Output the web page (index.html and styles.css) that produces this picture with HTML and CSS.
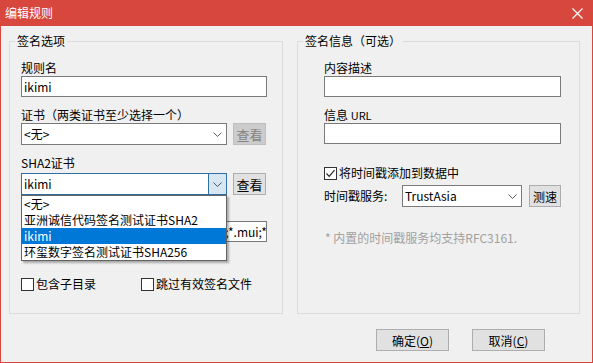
FILE: index.html
```html
<!DOCTYPE html>
<html lang="zh-CN">
<head>
<meta charset="utf-8">
<title>编辑规则</title>
<link rel="stylesheet" href="styles.css">
</head>
<body>
<div class="window">
  <div class="titlebar">
    <span class="title">编辑规则</span>
    <svg class="close" width="11" height="11" viewBox="0 0 11 11"><path d="M0.5 0.5 L10.5 10.5 M10.5 0.5 L0.5 10.5" stroke="#fff" stroke-width="1.2" fill="none"/></svg>
  </div>
  <div class="content">
    <div class="groups">
      <fieldset class="group group-left">
        <legend>签名选项</legend>
        <div class="group-body">
          <div class="label">规则名</div>
          <div class="input w-full">ikimi</div>

          <div class="label mt10">证书（两类证书至少选择一个）</div>
          <div class="row gap6">
            <div class="combo w-combo">
              <span class="combo-text">&lt;无&gt;</span>
              <span class="arrow"><svg width="9" height="5" viewBox="0 0 9 5"><path d="M0.5 0.5 L4.5 4.5 L8.5 0.5" stroke="#5a5a5a" fill="none"/></svg></span>
            </div>
            <div class="btn btn-small disabled">查看</div>
          </div>

          <div class="label mt10">SHA2证书</div>
          <div class="row gap6 mt2">
            <div class="combo-wrap">
              <div class="combo w-combo focused">
                <span class="combo-text">ikimi</span>
                <span class="arrow hot"><svg width="9" height="5" viewBox="0 0 9 5"><path d="M0.5 0.5 L4.5 4.5 L8.5 0.5" stroke="#3a5a78" fill="none"/></svg></span>
              </div>
              <ul class="droplist">
                <li>&lt;无&gt;</li>
                <li>亚洲诚信代码签名测试证书SHA2</li>
                <li class="selected">ikimi</li>
                <li>环玺数字签名测试证书SHA256</li>
              </ul>
            </div>
            <div class="btn btn-small">查看</div>
          </div>

          <div class="label mt10 spacer"></div>
          <div class="input w-full">*.exe;*.dll;*.ocx;*.ax;*.sys;*.cab;*.msi;*.mui;*.appx</div>

          <div class="checks">
            <div class="check"><span class="cb"></span><span>包含子目录</span></div>
            <div class="check"><span class="cb"></span><span>跳过有效签名文件</span></div>
          </div>
        </div>
      </fieldset>

      <fieldset class="group group-right">
        <legend>签名信息（可选）</legend>
        <div class="group-body right-body">
          <div class="label">内容描述</div>
          <div class="input w-right"></div>

          <div class="label mt10">信息 <span class="latin">URL</span></div>
          <div class="input w-right"></div>

          <div class="check ts-check"><span class="cb checked"><svg width="11" height="11" viewBox="0 0 11 11"><path d="M1.5 5.5 L4.2 8.3 L9.5 2.2" stroke="#222" stroke-width="1.2" fill="none"/></svg></span><span>将时间戳添加到数据中</span></div>

          <div class="row ts-row">
            <span class="ts-label">时间戳服务:</span>
            <div class="combo w-ts">
              <span class="combo-text">TrustAsia</span>
              <span class="arrow"><svg width="9" height="5" viewBox="0 0 9 5"><path d="M0.5 0.5 L4.5 4.5 L8.5 0.5" stroke="#5a5a5a" fill="none"/></svg></span>
            </div>
            <div class="btn btn-speed">测速</div>
          </div>

          <div class="note">* 内置的时间戳服务均支持RFC3161.</div>
        </div>
      </fieldset>
    </div>

    <div class="buttons">
      <div class="btn btn-dialog">确定(<u>O</u>)</div>
      <div class="btn btn-dialog">取消(<u>C</u>)</div>
    </div>
  </div>
</div>
</body>
</html>
```

FILE: styles.css
```css
html, body {
  margin: 0;
  padding: 0;
  background: #f0f0f0;
}

body {
  font-family: "Noto Sans CJK SC", "Microsoft YaHei", sans-serif;
  font-size: 12px;
  color: #000;
}

.window {
  width: 593px;
  height: 363px;
  box-sizing: border-box;
  border: 1px solid #d8473d;
  border-top: 0;
  background: #f0f0f0;
  display: flex;
  flex-direction: column;
}

.titlebar {
  height: 26px;
  margin: 0 -1px;
  background: #d8473d;
  color: #fff;
  display: flex;
  align-items: center;
  justify-content: space-between;
  padding: 0 10px 0 5px;
}

.title {
  line-height: 16px;
}

.close {
  display: block;
}

.content {
  padding: 8px 0 0 8px;
}

.groups {
  display: flex;
  gap: 14px;
}

.group {
  margin: 0;
  padding: 0;
  border: 1px solid #dcdcdc;
  box-sizing: border-box;
  height: 280px;
  min-width: 0;
}

.group-left {
  width: 274px;
}

.group-right {
  width: 283px;
}

legend {
  padding: 0 2px;
  margin-left: 5px;
  line-height: 14px;
}

.group-body {
  padding: 12px 0 0 11px;
}

.right-body {
  padding-left: 26px;
}

.label {
  height: 16px;
  line-height: 16px;
  white-space: nowrap;
}

.latin {
  font-size: 11px;
}

.mt10 { margin-top: 10px; }
.mt2 { margin-top: 2px; }

.input {
  height: 21px;
  box-sizing: border-box;
  border: 1px solid #7a7a7a;
  background: #fff;
  line-height: 19px;
  padding: 0 2px;
  white-space: nowrap;
  overflow: hidden;
}

.w-full { width: 246px; }
.w-right { width: 237px; }

.row {
  display: flex;
  align-items: center;
}

.gap6 { gap: 6px; }

.combo {
  height: 22px;
  box-sizing: border-box;
  border: 1px solid #7a7a7a;
  background: #fff;
  display: flex;
  align-items: stretch;
}

.combo-text {
  flex: 1;
  line-height: 20px;
  padding-left: 2px;
  white-space: nowrap;
  overflow: hidden;
}

.arrow {
  width: 17px;
  display: flex;
  align-items: center;
  justify-content: center;
}

.arrow svg {
  display: block;
}

.w-combo { width: 206px; }
.w-ts { width: 120px; }

.combo.focused {
  border-color: #2f6fa8;
}

.arrow.hot {
  background: #d8e6f2;
  border-left: 1px solid #2f6fa8;
}

.combo-wrap {
  position: relative;
}

.droplist {
  position: absolute;
  left: 0;
  top: 100%;
  width: 206px;
  box-sizing: border-box;
  margin: 0;
  padding: 0;
  list-style: none;
  background: #fff;
  border: 1px solid #646464;
  box-shadow: 2px 2px 2px rgba(0, 0, 0, 0.3);
  z-index: 2;
}

.droplist li {
  height: 16px;
  line-height: 16px;
  padding-left: 2px;
  white-space: nowrap;
}

.droplist li.selected {
  background: #0078d7;
  color: #fff;
}

.btn {
  box-sizing: border-box;
  border: 1px solid #adadad;
  background: #e1e1e1;
  display: flex;
  align-items: center;
  justify-content: center;
  white-space: nowrap;
}

.btn-small {
  width: 33px;
  height: 22px;
  font-size: 13px;
}

.btn.disabled {
  background: #cccccc;
  border-color: #bfbfbf;
  color: #838383;
}

.btn-speed {
  width: 32px;
  height: 22px;
  margin-left: 7px;
}

.checks {
  display: flex;
  margin-top: 34px;
}

.check {
  display: flex;
  align-items: center;
  height: 16px;
  line-height: 16px;
  white-space: nowrap;
}

.checks .check:first-child {
  width: 120px;
}

.cb {
  width: 13px;
  height: 13px;
  box-sizing: border-box;
  border: 1px solid #333;
  background: #fff;
  margin-right: 2px;
  display: flex;
  align-items: center;
  justify-content: center;
}

.cb svg {
  display: block;
}

.ts-check {
  margin-top: 21px;
}

.ts-row {
  margin-top: 4px;
}

.ts-label {
  width: 78px;
  line-height: 16px;
}

.note {
  margin-top: 23px;
  line-height: 16px;
  color: #a0a0a0;
  padding-left: 1px;
}

.buttons {
  display: flex;
  justify-content: flex-end;
  gap: 23px;
  margin-top: 15px;
  padding-right: 47px;
}

.btn-dialog {
  width: 73px;
  height: 22px;
}

.btn-dialog u {
  text-underline-offset: 1px;
}
```
